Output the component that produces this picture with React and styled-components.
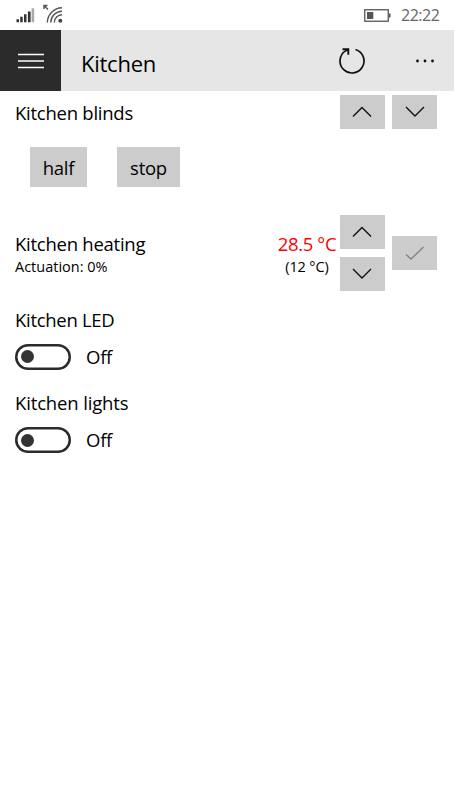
import React from "react";
import styled, { createGlobalStyle, css } from "styled-components";

const GlobalStyle = createGlobalStyle`
  * {
    box-sizing: border-box;
  }

  body {
    margin: 0;
    background: #fff;
    color: #000;
    font-family: "Open Sans", "Noto Sans", sans-serif;
  }
`;

const Screen = styled.div`
  width: 456px;
  height: 810px;
  overflow: hidden;
  background: #fff;
`;

const StatusBar = styled.div`
  display: flex;
  align-items: center;
  justify-content: space-between;
  height: 30px;
  padding: 0 16px;
`;

const StatusGroup = styled.div`
  display: flex;
  align-items: center;
  gap: ${props => props.$gap};
`;

const Clock = styled.span`
  width: 39px;
  color: #666;
  font-size: 16px;
  line-height: 30px;
  letter-spacing: -0.5px;
  white-space: nowrap;
`;

const Header = styled.header`
  display: flex;
  align-items: center;
  width: 454px;
  height: 61px;
  background: #e6e6e6;
`;

const HeaderButton = styled.button`
  display: flex;
  align-items: center;
  justify-content: center;
  width: ${props => props.$width || "61px"};
  height: 61px;
  border: 0;
  padding: 0;
  background: transparent;
  color: #111;

  ${props =>
    props.$dark &&
    css`
      background: #2b2b2b;
      color: #fff;
    `};
`;

const Title = styled.h1`
  flex: 1;
  margin: 0 0 0 20px;
  padding-top: 5px;
  font-size: 22px;
  font-weight: 400;
  line-height: 30px;
  letter-spacing: -0.25px;
`;

const Panel = styled.main`
  padding: 4px 19.2px 0 15px;
`;

const Row = styled.div`
  display: flex;
  align-items: center;
  justify-content: space-between;
`;

const Label = styled.div`
  font-size: 18.5px;
  line-height: 26px;
  letter-spacing: ${props => props.$spacing || "-0.25px"};
  white-space: nowrap;
`;

const Detail = styled.div`
  font-size: 14.5px;
  line-height: 20px;
  letter-spacing: ${props => props.$spacing || "0"};
  white-space: nowrap;
`;

const Controls = styled.div`
  display: flex;
  align-items: center;
  gap: 7.7px;
`;

const Stepper = styled.div`
  display: flex;
  flex-direction: column;
  gap: 8px;
`;

const SquareButton = styled.button`
  display: flex;
  align-items: center;
  justify-content: center;
  width: 44.5px;
  height: 34px;
  border: 0;
  padding: 0;
  background: #ccc;
  color: ${props => (props.disabled ? "#858585" : "#111")};
`;

const Presets = styled.div`
  display: flex;
  gap: 30px;
  margin: 18px 0 28px 15px;
`;

const PresetButton = styled.button`
  width: ${props => props.$width};
  height: 40px;
  border: 0;
  padding: 0;
  background: #ccc;
  color: #000;
  font: inherit;
  font-size: 18.5px;
  line-height: 41px;
  letter-spacing: -0.25px;
`;

const Names = styled.div`
  padding-top: 1px;
`;

const Temperature = styled.div`
  display: flex;
  flex-direction: column;
  align-items: center;
  width: 59px;
  margin-right: -4px;
  padding-top: 1px;
`;

const Target = styled(Label)`
  color: #f00;
`;

const SwitchBlock = styled.section`
  height: 83.5px;
`;

const SwitchRow = styled.div`
  display: flex;
  align-items: center;
  gap: 15px;
  margin-top: 11px;
`;

const Track = styled.button`
  display: flex;
  align-items: center;
  width: 56px;
  height: 26px;
  border: 0;
  border-radius: 13px;
  padding: 0 0 0 6px;
  background: #fff;
  box-shadow: inset 0 0 0 2.5px #2b2b2b;
`;

const Knob = styled.span`
  width: 13px;
  height: 13px;
  border-radius: 50%;
  background: #333;
`;

const Switches = styled.div`
  margin-top: 15.5px;
`;

const SignalIcon = () => (
  <svg width="19" height="16" viewBox="0 0 19 16">
    <path d="M0.500 12.200h2.500v3H0.500zM4.200 9.700h2.500v5.500H4.200zM8 7.300h2.500v7.900H8zM11.900 4.500h2.700v10.700h-2.700z" fill="#333" />
    <path d="M15.600 1.300h2.600v13.900h-2.600z" fill="#aaa" />
  </svg>
);

const WifiIcon = () => (
  <svg width="20" height="22" viewBox="0 0 20 22" fill="none" stroke="#555">
    <path d="M1 5V1.500H4.500M1.300 1.800 5 5.500" strokeWidth="1.500" />
    <path
      d="M4.300 18.500A15 15 0 0 1 19 3.800M7.800 18.500A11.300 11.300 0 0 1 19 7.300M11.300 18.500A7.800 7.800 0 0 1 19 10.800"
      strokeWidth="1.400"
    />
    <circle cx="17.300" cy="16.700" r="2" fill="#444" stroke="none" />
  </svg>
);

const BatteryIcon = () => (
  <svg width="27" height="13" viewBox="0 0 27 13">
    <rect x="0.750" y="0.750" width="23.500" height="11.500" fill="none" stroke="#555" strokeWidth="1.300" />
    <path d="M3 3h6.300v7H3zM25 4.500h1.500v4H25z" fill="#555" />
  </svg>
);

const MenuIcon = () => (
  <svg width="26" height="16" viewBox="0 0 26 16" stroke="currentColor" strokeWidth="1.500">
    <path d="M0 1.500h26M0 8h26M0 14.500h26" />
  </svg>
);

const RefreshIcon = () => (
  <svg width="28" height="28" viewBox="0 0 28 28" fill="none" stroke="currentColor" strokeWidth="1.700">
    <path d="M17.500 2.500A12 12 0 1 1 7.500 3.900L10.300 2.300" />
    <path d="M4.500 2.200H10.300V7.800" strokeWidth="1.900" />
  </svg>
);

const MoreIcon = () => (
  <svg width="20" height="4" viewBox="0 0 20 4" fill="currentColor">
    <circle cx="2.500" cy="2" r="1.400" />
    <circle cx="10" cy="2" r="1.400" />
    <circle cx="17.500" cy="2" r="1.400" />
  </svg>
);

const glyphs = {
  up: "M1 11.500 10 2.500l9 9",
  down: "M1 2l9 9 9-9",
  check: "M1 8.500 6 13 18.500 1"
};

const Glyph = ({ name }) => (
  <svg width="20" height="14" viewBox="0 0 20 14" fill="none" stroke="currentColor" strokeWidth="1.400">
    <path d={glyphs[name]} />
  </svg>
);

const IconButton = ({ name, ...rest }) => (
  <SquareButton aria-label={name} {...rest}>
    <Glyph name={name} />
  </SquareButton>
);

const switches = [
  { name: "Kitchen LED", spacing: "-0.3px" },
  { name: "Kitchen lights", spacing: "-0.15px" }
];

export default function App() {
  return (
    <Screen>
      <GlobalStyle />
      <StatusBar>
        <StatusGroup $gap="8px">
          <SignalIcon />
          <WifiIcon />
        </StatusGroup>
        <StatusGroup $gap="10px">
          <BatteryIcon />
          <Clock>22:22</Clock>
        </StatusGroup>
      </StatusBar>
      <Header>
        <HeaderButton $dark aria-label="menu">
          <MenuIcon />
        </HeaderButton>
        <Title>Kitchen</Title>
        <HeaderButton $width="86px" aria-label="refresh">
          <RefreshIcon />
        </HeaderButton>
        <HeaderButton $width="59px" aria-label="more">
          <MoreIcon />
        </HeaderButton>
      </Header>
      <Panel>
        <Row>
          <Names>
            <Label>Kitchen blinds</Label>
          </Names>
          <Controls>
            <IconButton name="up" />
            <IconButton name="down" />
          </Controls>
        </Row>
        <Presets>
          <PresetButton $width="57px">half</PresetButton>
          <PresetButton $width="63px">stop</PresetButton>
        </Presets>
        <Row>
          <Names>
            <Label>Kitchen heating</Label>
            <Detail>Actuation: 0%</Detail>
          </Names>
          <Controls>
            <Temperature>
              <Target $spacing="-0.35px">28.5 °C</Target>
              <Detail $spacing="-0.15px">(12 °C)</Detail>
            </Temperature>
            <Stepper>
              <IconButton name="up" />
              <IconButton name="down" />
            </Stepper>
            <IconButton name="check" disabled />
          </Controls>
        </Row>
        <Switches>
          {switches.map(({ name, spacing }) => (
            <SwitchBlock key={name}>
              <Label $spacing={spacing}>{name}</Label>
              <SwitchRow>
                <Track role="switch" aria-checked="false" aria-label={name}>
                  <Knob />
                </Track>
                <Label>Off</Label>
              </SwitchRow>
            </SwitchBlock>
          ))}
        </Switches>
      </Panel>
    </Screen>
  );
}
